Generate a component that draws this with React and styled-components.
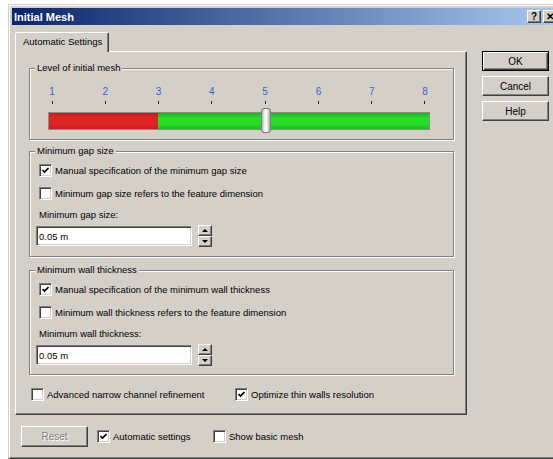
import React from "react";
import styled, { createGlobalStyle } from "styled-components";

const GlobalStyle = createGlobalStyle`
  html, body {
    margin: 0;
    padding: 0;
    background: #fff;
    overflow: hidden;
  }
  body {
    font-family: "Liberation Sans", Arial, sans-serif;
    font-size: 9.5px;
    color: #000;
  }
`;

// slider geometry
const LEVELS = [1, 2, 3, 4, 5, 6, 7, 8];
const SCALE_INSET = 4;
const SCALE_SPAN = 372;
const levelX = (n) => SCALE_INSET + ((n - 1) / (LEVELS.length - 1)) * SCALE_SPAN;

const Window = styled.div`
  box-sizing: border-box;
  width: 555px;
  height: 455px;
  margin: 4px 0 0 8px;
  padding: 3px;
  background: #d4d0c8;
  border: 1px solid;
  border-color: #d4d0c8 #404040 #404040 #d4d0c8;
  box-shadow: inset 1px 1px #fff, inset -1px -1px #808080;
  display: flex;
  flex-direction: column;
`;

const TitleBar = styled.div`
  height: 17px;
  display: flex;
  align-items: center;
  padding: 0 2px 0 2px;
  background: linear-gradient(to right, #0a246a, #a6caf0);
`;

const Title = styled.div`
  flex: 1;
  color: #fff;
  font-weight: bold;
  font-size: 11px;
`;

const CaptionButton = styled.div`
  box-sizing: border-box;
  width: 14px;
  height: 13px;
  margin-left: ${(p) => (p.$gap ? "2px" : "0")};
  display: flex;
  align-items: center;
  justify-content: center;
  background: #d4d0c8;
  border: 1px solid;
  border-color: #fff #404040 #404040 #fff;
  box-shadow: inset -1px -1px #808080;
  font-weight: bold;
  font-size: 10px;
  line-height: 1;
`;

const Body = styled.div`
  display: flex;
  padding: 7px 0 0 3px;
`;

const LeftColumn = styled.div`
  display: flex;
  flex-direction: column;
`;

const TabStrip = styled.div`
  display: flex;
`;

const Tab = styled.div`
  position: relative;
  box-sizing: border-box;
  height: 20px;
  margin-bottom: -1px;
  padding: 3px 6px 0 7px;
  background: #d4d0c8;
  border: 1px solid;
  border-bottom: none;
  border-color: #fff #404040 transparent #fff;
  border-radius: 2px 2px 0 0;
  box-shadow: inset -1px 0 #808080;
`;

const Panel = styled.div`
  box-sizing: border-box;
  width: 452px;
  padding: 10px 12px 13px 13px;
  border: 1px solid;
  border-color: #fff #404040 #404040 #fff;
  box-shadow: inset -1px -1px #808080;
`;

const Group = styled.fieldset`
  margin: ${(p) => p.$mt || 0}px 0 0 0;
  padding: 0;
  min-width: 0;
  border: 1px solid #808080;
  box-shadow: inset 1px 1px #fff, 1px 1px #fff;
`;

const Legend = styled.legend`
  margin-left: 5px;
  padding: 0 2px;
  line-height: 12px;
  background: #d4d0c8;
`;

const SliderBody = styled.div`
  padding: 12px 23px 6px 18px;
`;

const Scale = styled.div`
  display: flex;
  justify-content: space-between;
  margin-right: 1px;
`;

const Mark = styled.div`
  width: 8px;
  display: flex;
  flex-direction: column;
  align-items: center;
`;

const MarkLabel = styled.span`
  color: #3c5fd2;
  font-size: 10px;
  line-height: 12px;
`;

const Tick = styled.span`
  width: 1px;
  height: 3px;
  margin-top: 3px;
  background: #202020;
`;

const Track = styled.div`
  position: relative;
  height: 25px;
  margin-top: 4px;
  display: flex;
  align-items: center;
`;

const Bar = styled.div`
  flex: 1;
  box-sizing: border-box;
  height: 18px;
  display: flex;
  border: 1px solid #8c8c8c;
  box-shadow: inset 1px 1px #b8b8b8;
`;

const Segment = styled.div`
  flex: ${(p) => (p.$grow ? 1 : "none")};
  background: ${(p) =>
    p.$tone === "red"
      ? "linear-gradient(#c41a1a, #e22626 35%, #e02424 70%, #c81c1c)"
      : "linear-gradient(#1ab41a, #2ae02a 35%, #28dc28 70%, #1cbc1c)"};
`;

const Thumb = styled.div`
  position: absolute;
  top: 0;
  box-sizing: border-box;
  width: 10px;
  height: 25px;
  border: 1px solid #7c7c7c;
  border-radius: 3px;
  background: linear-gradient(to right, #b4b4b4, #f4f4f4 35%, #ffffff 55%, #d0d0d0 80%, #a0a0a0);
`;

const GroupBody = styled.div`
  padding: 7px 10px ${(p) => p.$pb || 10}px 9px;
`;

const CheckLabel = styled.label`
  display: flex;
  align-items: center;
  gap: 3px;
  height: 13px;
  margin-top: ${(p) => p.$mt || 0}px;
  margin-left: ${(p) => p.$ml || 0}px;
  width: ${(p) => (p.$w ? `${p.$w}px` : "auto")};
  white-space: nowrap;
`;

const Box = styled.span`
  box-sizing: border-box;
  flex: none;
  width: 13px;
  height: 13px;
  display: flex;
  align-items: center;
  justify-content: center;
  background: #fff;
  border: 1px solid;
  border-color: #808080 #fff #fff #808080;
  box-shadow: inset 1px 1px #404040, inset -1px -1px #d4d0c8;
`;

const FieldLabel = styled.div`
  margin-top: 9px;
  line-height: 12px;
`;

const InputRow = styled.div`
  display: flex;
  align-items: center;
  gap: 6px;
  margin: 4px 0 0 -3px;
`;

const TextField = styled.div`
  box-sizing: border-box;
  width: 156px;
  height: 20px;
  padding: 0 2px;
  display: flex;
  align-items: center;
  background: #fff;
  border: 1px solid;
  border-color: #808080 #fff #fff #808080;
  box-shadow: inset 1px 1px #404040, inset -1px -1px #d4d0c8;
`;

const Spin = styled.div`
  width: 14px;
  height: 22px;
  display: flex;
  flex-direction: column;
`;

const SpinButton = styled.div`
  flex: 1;
  box-sizing: border-box;
  display: flex;
  align-items: center;
  justify-content: center;
  background: #d4d0c8;
  border: 1px solid;
  border-color: #fff #404040 #404040 #fff;
  box-shadow: inset -1px -1px #808080;
`;

const Arrow = styled.span`
  width: 0;
  height: 0;
  border-left: 3px solid transparent;
  border-right: 3px solid transparent;
  ${(p) => (p.$up ? "border-bottom: 3px solid #000;" : "border-top: 3px solid #000;")}
`;

const OptionsRow = styled.div`
  display: grid;
  grid-template-columns: 204px auto;
  margin: 13px 0 0 2px;
`;

const Footer = styled.div`
  display: flex;
  align-items: center;
  margin-top: 11px;
  padding-left: 6px;
`;

const Button = styled.div`
  box-sizing: border-box;
  width: 67px;
  height: ${(p) => p.$h || 20}px;
  display: flex;
  align-items: center;
  justify-content: center;
  font-size: 10px;
  background: #d4d0c8;
  color: ${(p) => (p.$disabled ? "#808080" : "#000")};
  text-shadow: ${(p) => (p.$disabled ? "1px 1px #fff" : "none")};
  border: 1px solid;
  border-color: ${(p) => (p.$default ? "#000" : "#fff #404040 #404040 #fff")};
  box-shadow: ${(p) =>
    p.$default
      ? "inset 1px 1px #fff, inset -1px -1px #404040, inset -2px -2px #808080"
      : "inset -1px -1px #808080"};
`;

const ButtonColumn = styled.div`
  display: flex;
  flex-direction: column;
  gap: 5px;
  margin: 19px 0 0 15px;
`;

const CheckMark = () => (
  <svg width="7" height="7" viewBox="0 0 7 7">
    <path d="M0.5 3 L2.5 5 L6.5 1" stroke="#000" strokeWidth="1.7" fill="none" />
  </svg>
);

const Check = ({ checked, children, ...rest }) => (
  <CheckLabel {...rest}>
    <Box>{checked && <CheckMark />}</Box>
    <span>{children}</span>
  </CheckLabel>
);

const NumberField = ({ value }) => (
  <InputRow>
    <TextField>{value}</TextField>
    <Spin>
      <SpinButton>
        <Arrow $up />
      </SpinButton>
      <SpinButton>
        <Arrow />
      </SpinButton>
    </Spin>
  </InputRow>
);

const LevelSlider = ({ level, refined }) => (
  <SliderBody>
    <Scale>
      {LEVELS.map((n) => (
        <Mark key={n}>
          <MarkLabel>{n}</MarkLabel>
          <Tick />
        </Mark>
      ))}
    </Scale>
    <Track>
      <Bar>
        <Segment $tone="red" style={{ width: levelX(refined) - 1 }} />
        <Segment $tone="green" $grow />
      </Bar>
      <Thumb style={{ left: levelX(level) - 4 }} />
    </Track>
  </SliderBody>
);

export default function App() {
  return (
    <>
      <GlobalStyle />
      <Window>
        <TitleBar>
          <Title>Initial Mesh</Title>
          <CaptionButton>?</CaptionButton>
          <CaptionButton $gap>✕</CaptionButton>
        </TitleBar>
        <Body>
          <LeftColumn>
            <TabStrip>
              <Tab>Automatic Settings</Tab>
            </TabStrip>
            <Panel>
              <Group>
                <Legend>Level of initial mesh</Legend>
                <LevelSlider level={5} refined={3} />
              </Group>

              <Group $mt={5}>
                <Legend>Minimum gap size</Legend>
                <GroupBody $pb={9}>
                  <Check checked>Manual specification of the minimum gap size</Check>
                  <Check $mt={10}>Minimum gap size refers to the feature dimension</Check>
                  <FieldLabel>Minimum gap size:</FieldLabel>
                  <NumberField value="0.05 m" />
                </GroupBody>
              </Group>

              <Group $mt={7}>
                <Legend>Minimum wall thickness</Legend>
                <GroupBody $pb={8}>
                  <Check checked>Manual specification of the minimum wall thickness</Check>
                  <Check $mt={10}>Minimum wall thickness refers to the feature dimension</Check>
                  <FieldLabel>Minimum wall thickness:</FieldLabel>
                  <NumberField value="0.05 m" />
                </GroupBody>
              </Group>

              <OptionsRow>
                <Check>Advanced narrow channel refinement</Check>
                <Check checked>Optimize thin walls resolution</Check>
              </OptionsRow>
            </Panel>
            <Footer>
              <Button $h={21} $disabled>Reset</Button>
              <Check checked $ml={9} $w={116}>Automatic settings</Check>
              <Check>Show basic mesh</Check>
            </Footer>
          </LeftColumn>
          <ButtonColumn>
            <Button $default>OK</Button>
            <Button>Cancel</Button>
            <Button>Help</Button>
          </ButtonColumn>
        </Body>
      </Window>
    </>
  );
}
